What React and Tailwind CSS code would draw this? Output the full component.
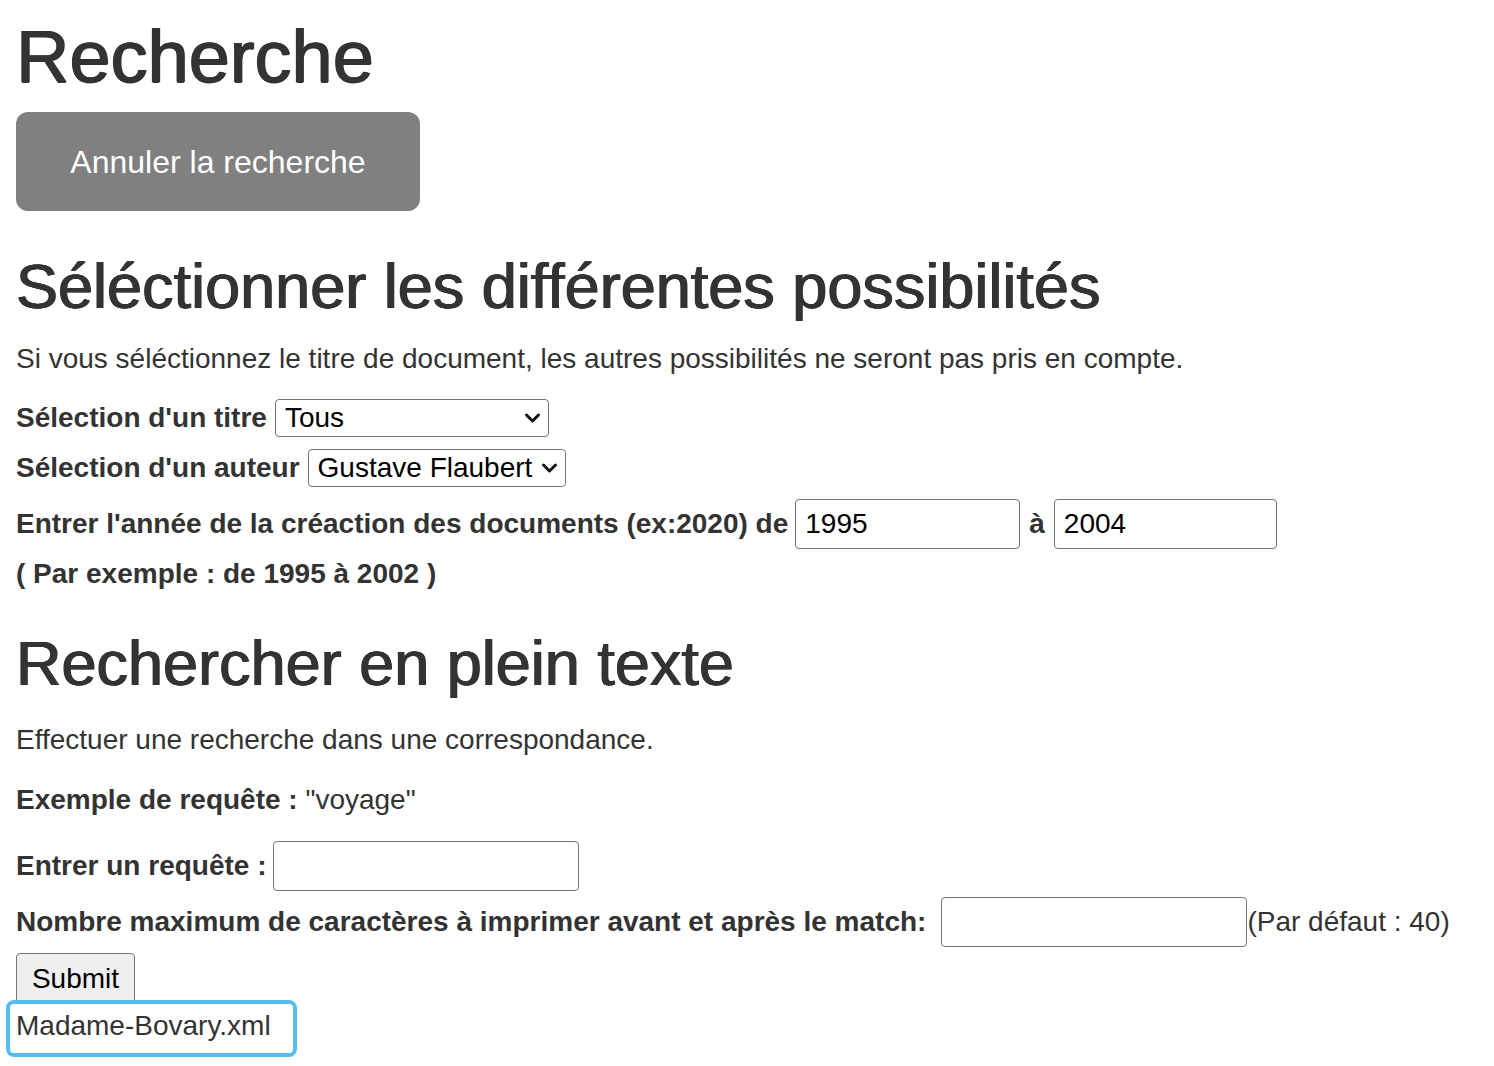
import React, { useState } from 'react';

const font = { fontFamily: '"Liberation Sans", Arial, sans-serif' };

function Chevron() {
  return (
    <svg
      className="pointer-events-none absolute right-[8px] top-1/2 -translate-y-1/2"
      width="17"
      height="11"
      viewBox="0 0 17 11"
      fill="none"
    >
      <path d="M2.5 2.5l6 6 6-6" stroke="#111" strokeWidth="3" strokeLinecap="round" strokeLinejoin="round" />
    </svg>
  );
}

function Select({ value, options, className }) {
  const [current, setCurrent] = useState(value);
  return (
    <div className={`relative ${className}`}>
      <select
        value={current}
        onChange={(e) => setCurrent(e.target.value)}
        className="h-full w-full appearance-none rounded-[4px] border border-[#767676] bg-white pl-[9px] pr-[30px] text-[28px] leading-none text-black outline-none"
      >
        {options.map((o) => (
          <option key={o}>{o}</option>
        ))}
      </select>
      <Chevron />
    </div>
  );
}

function TextInput({ value, className }) {
  const [current, setCurrent] = useState(value || '');
  return (
    <input
      type="text"
      value={current}
      onChange={(e) => setCurrent(e.target.value)}
      className={`rounded-[4px] border border-[#767676] bg-white px-[9px] text-[28px] text-black outline-none ${className}`}
    />
  );
}

export default function App() {
  return (
    <div className="min-h-screen bg-white pl-4 text-[#333]" style={font}>
      <h1 className="pt-[17px] text-[74px] leading-[80px] [text-shadow:0.8px_0_0_#333,-0.8px_0_0_#333,0_0.5px_0_#333]">
        Recherche
      </h1>

      <button className="mt-[15px] flex h-[99px] w-[404px] items-center justify-center rounded-[12px] bg-[#808080] text-[32px] text-white">
        Annuler la recherche
      </button>

      <h2 className="mt-[40px] text-[63px] leading-[70px] [text-shadow:0.7px_0_0_#333,-0.7px_0_0_#333,0_0.4px_0_#333]">
        Séléctionner les différentes possibilités
      </h2>
      <p className="mt-[20px] text-[28px] leading-[36px]">
        Si vous séléctionnez le titre de document, les autres possibilités ne seront pas pris en compte.
      </p>

      <div className="mt-[22px] flex h-[38px] items-center gap-[8px]">
        <label className="text-[28px] font-bold">Sélection d'un titre</label>
        <Select value="Tous" options={['Tous', 'Madame Bovary', 'Salammbô']} className="h-[38px] w-[274px]" />
      </div>
      <div className="mt-[12px] flex h-[38px] items-center gap-[8px]">
        <label className="text-[28px] font-bold">Sélection d'un auteur</label>
        <Select value="Gustave Flaubert" options={['Gustave Flaubert', 'Tous']} className="h-[38px] w-[258px]" />
      </div>

      <div className="mt-[12px] flex h-[50px] items-center">
        <label className="mr-[7px] text-[28px] font-bold">
          Entrer l'année de la créaction des documents (ex:2020) de
        </label>
        <TextInput value="1995" className="h-[50px] w-[225px]" />
        <span className="mx-[9px] text-[28px] font-bold">à</span>
        <TextInput value="2004" className="h-[50px] w-[223px]" />
      </div>
      <p className="mt-[7px] text-[28px] font-bold leading-[36px]">( Par exemple : de 1995 à 2002 )</p>

      <h2 className="mt-[36px] text-[63px] leading-[70px] [text-shadow:0.7px_0_0_#333,-0.7px_0_0_#333,0_0.4px_0_#333]">
        Rechercher en plein texte
      </h2>
      <p className="mt-[24px] text-[28px] leading-[36px]">Effectuer une recherche dans une correspondance.</p>
      <p className="mt-[24px] text-[28px] leading-[36px]">
        <span className="font-bold">Exemple de requête :</span> "voyage"
      </p>

      <div className="mt-[23px] flex h-[50px] items-center gap-[7px]">
        <label className="text-[28px] font-bold">Entrer un requête :</label>
        <TextInput className="h-[50px] w-[306px]" />
      </div>
      <div className="mt-[6px] flex h-[50px] items-center">
        <label className="mr-[15px] text-[28px] font-bold">
          Nombre maximum de caractères à imprimer avant et après le match:
        </label>
        <TextInput className="h-[50px] w-[306px]" />
        <span className="text-[28px]">(Par défaut : 40)</span>
      </div>

      <button className="mt-[6px] h-[52px] w-[119px] rounded-[4px] border border-[#767676] bg-[#efefef] text-[28px] text-black">
        Submit
      </button>

      <div className="relative -ml-[10px] -mt-[5px] flex h-[57px] w-[291px] items-center rounded-[8px] border-[4px] border-[#56bdf0] bg-white pb-[6px] pl-[6px] text-[28px]">
        Madame-Bovary.xml
      </div>
    </div>
  );
}
